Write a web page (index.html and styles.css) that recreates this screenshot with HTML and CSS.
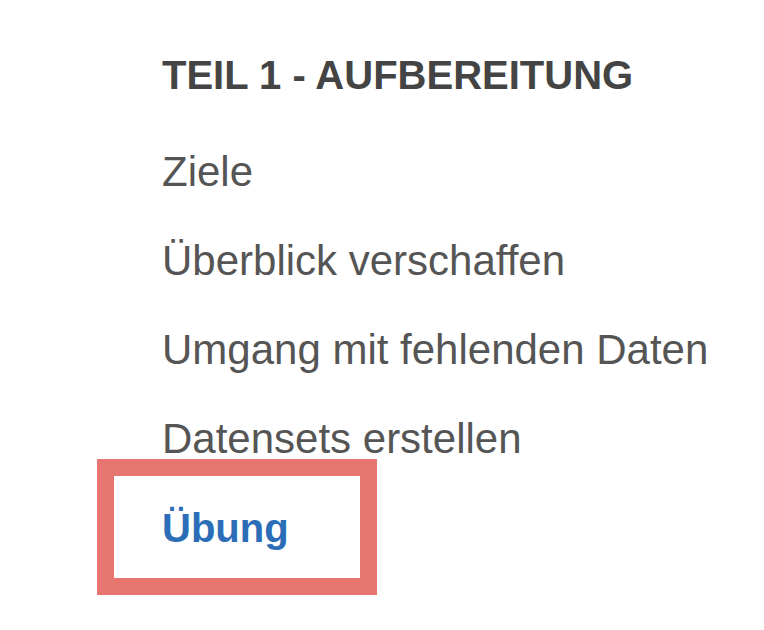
FILE: index.html
```html
<!DOCTYPE html>
<html lang="de">
<head>
<meta charset="utf-8">
<title>Teil 1 - Aufbereitung</title>
<link rel="stylesheet" href="styles.css">
</head>
<body>
<nav class="toc">
  <h2 class="toc-title">TEIL 1 - AUFBEREITUNG</h2>
  <ul class="toc-list">
    <li class="toc-item">Ziele</li>
    <li class="toc-item">Überblick verschaffen</li>
    <li class="toc-item">Umgang mit fehlenden Daten</li>
    <li class="toc-item">Datensets erstellen</li>
    <li class="toc-item toc-item--active"><span class="toc-link">Übung</span></li>
  </ul>
</nav>
</body>
</html>
```
FILE: styles.css
```css
html, body {
  margin: 0;
  padding: 0;
  background: #ffffff;
}

body {
  min-height: 630px;
}

.toc {
  padding: 45px 0 58px 162px;
  font-family: "Liberation Sans", Arial, sans-serif;
}

.toc-title {
  margin: 0 0 22px;
  font-size: 40px;
  line-height: 60px;
  font-weight: 700;
  color: #444444;
  white-space: nowrap;
}

.toc-list {
  list-style: none;
  margin: 0;
  padding: 0;
}

.toc-item {
  font-size: 42px;
  line-height: 89px;
  color: #555555;
  white-space: nowrap;
}

.toc-item--active {
  position: relative;
}

.toc-link {
  color: #2b6db6;
  font-weight: 700;
  font-size: 40px;
}

.toc-item--active::before {
  content: "";
  position: absolute;
  left: -65px;
  top: -24px;
  width: 246px;
  height: 102px;
  border: 17px solid #e87670;
}
```
